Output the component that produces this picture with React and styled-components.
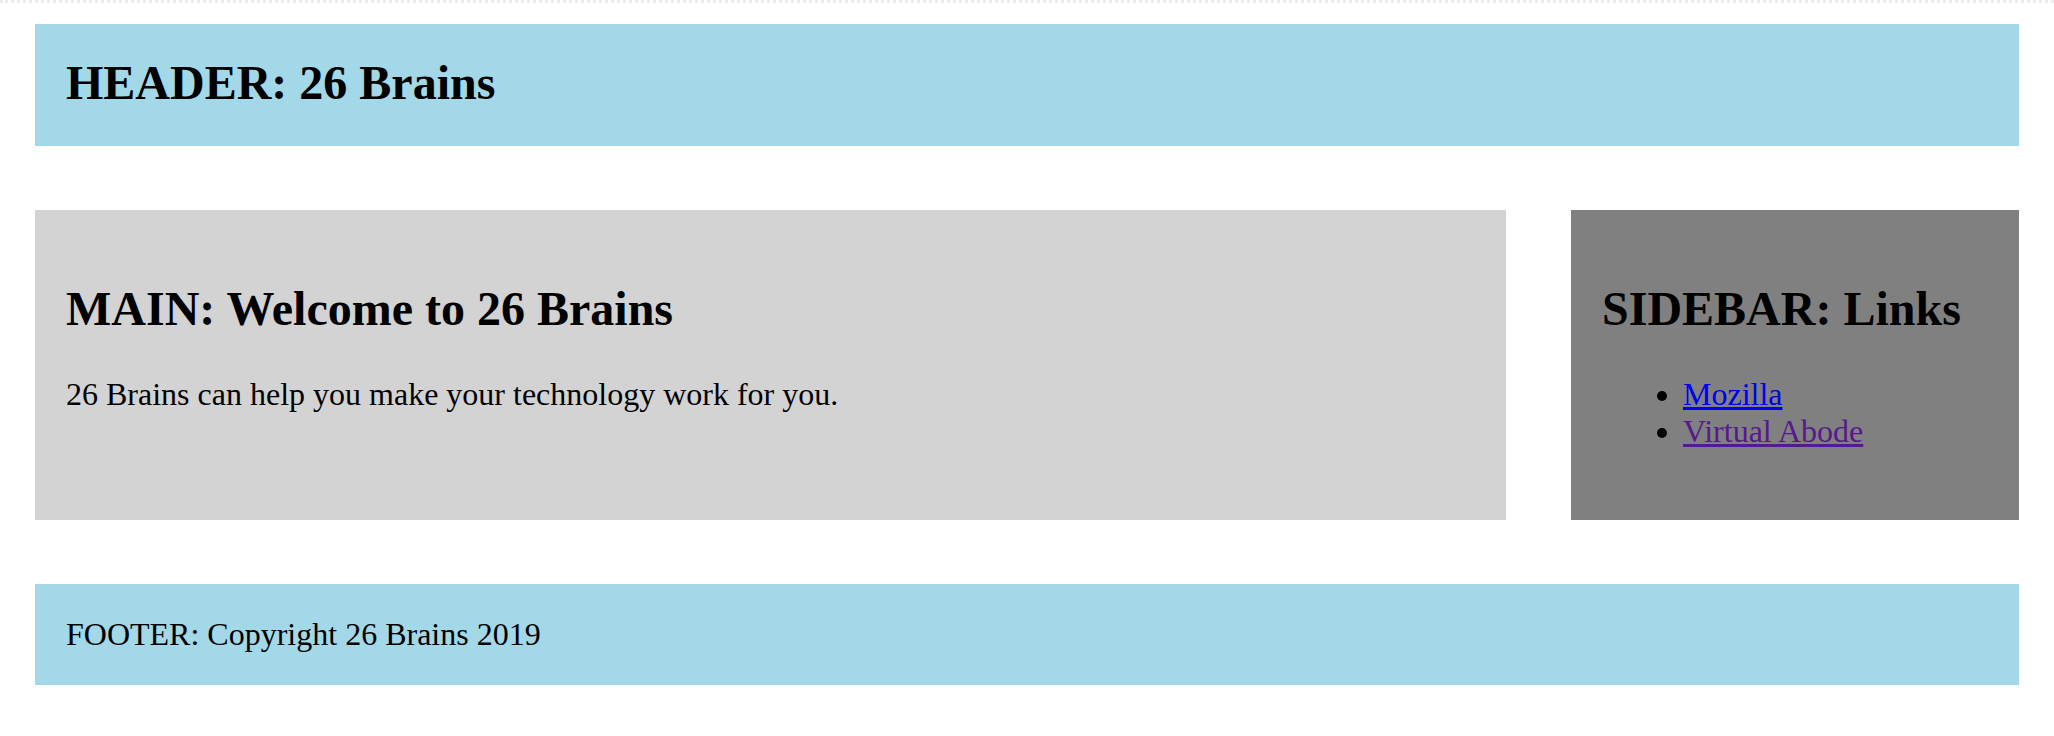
import React from 'react'
import styled, { createGlobalStyle } from 'styled-components'

const GlobalStyle = createGlobalStyle`
    html, body {
        margin: 0;
        padding: 0;
        background: #fff;
    }
    body {
        font-family: "Liberation Serif", "Times New Roman", serif;
        font-size: 32px;
        line-height: 1.15;
        color: #000;
        border-top: 3px dotted #ececec;
    }
`

const Page = styled.div`
    display: grid;
    grid-template-columns: 1fr 448px;
    grid-template-areas:
        "header header"
        "main sidebar"
        "footer footer";
    gap: 64px 65px;
    padding: 21px 35px 0;
`

const Header = styled.header`
    grid-area: header;
    background-color: #a2d8e8;
    padding: 31px 31px 36px;
`

const Title = styled.h2`
    font-size: 48px;
    font-weight: bold;
    line-height: 55px;
    margin: ${props => (props.flat ? '0' : '40px 0')};
`

const Main = styled.main`
    grid-area: main;
    background-color: #d3d3d3;
    padding: 31px 31px 38px;
`

const Text = styled.p`
    margin: 32px 0;
`

const Sidebar = styled.aside`
    grid-area: sidebar;
    background-color: #808080;
    padding: 31px 31px 38px;
`

const LinkList = styled.ul`
    margin: 32px 0;
    padding-left: 81px;
`

const Link = styled.a`
    color: ${props => (props.visited ? '#551a8b' : '#0000ee')};
    text-decoration: underline;
`

const Footer = styled.footer`
    grid-area: footer;
    background-color: #a2d8e8;
    padding: 32px 31px 33px;
`

const App = () => {
    return (
        <>
            <GlobalStyle />
            <Page>
                <Header>
                    <Title flat>HEADER: 26 Brains</Title>
                </Header>
                <Main>
                    <Title>MAIN: Welcome to 26 Brains</Title>
                    <Text>26 Brains can help you make your technology work for you.</Text>
                </Main>
                <Sidebar>
                    <Title>SIDEBAR: Links</Title>
                    <LinkList>
                        <li><Link href="#mozilla">Mozilla</Link></li>
                        <li><Link href="#abode" visited>Virtual Abode</Link></li>
                    </LinkList>
                </Sidebar>
                <Footer>FOOTER: Copyright 26 Brains 2019</Footer>
            </Page>
        </>
    )
}

export default App
